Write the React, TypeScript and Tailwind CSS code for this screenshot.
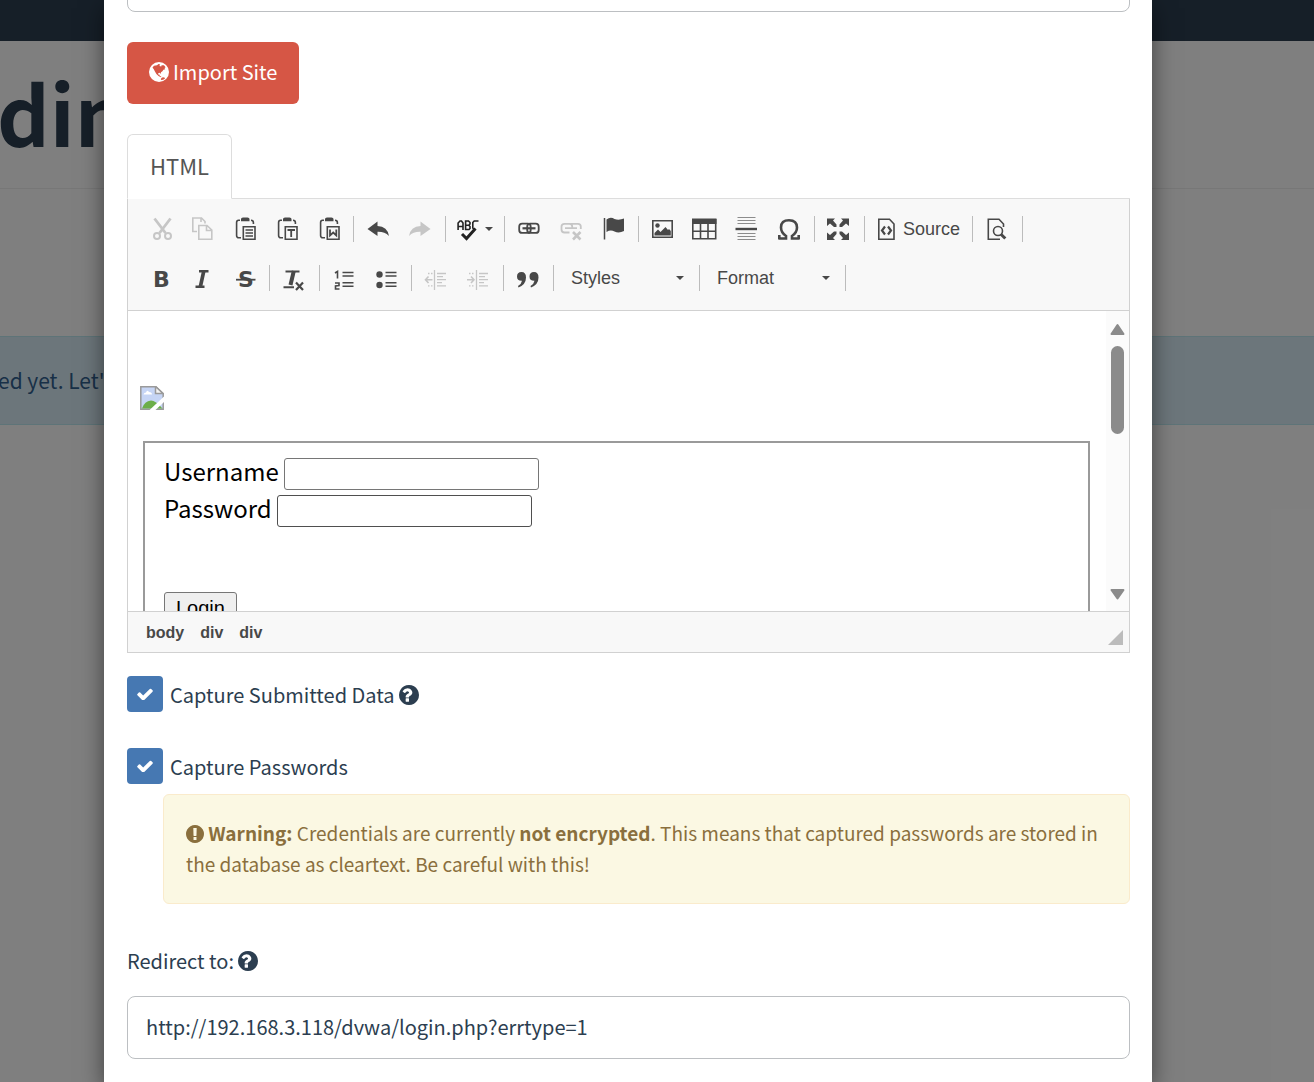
import React from 'react';

type IconProps = { children: React.ReactNode; muted?: boolean };

const Icon = ({ children, muted }: IconProps) => (
  <svg
    viewBox="0 0 24 24"
    width={24}
    height={24}
    fill="none"
    stroke="currentColor"
    strokeWidth={1.6}
    className={muted ? 'shrink-0 overflow-visible text-[#c6c6c6]' : 'shrink-0 overflow-visible text-[#484848]'}
    aria-hidden="true"
  >
    {children}
  </svg>
);

const ToolButton = ({ label, muted, children }: IconProps & { label: string }) => (
  <button type="button" title={label} aria-label={label} disabled={muted} className="flex h-12 w-[42px] items-center justify-center">
    <Icon muted={muted}>{children}</Icon>
  </button>
);

const Separator = () => <span className="ml-[3px] mr-1 h-[26px] w-px bg-[#bcbcbc]" />;

const Clipboard = ({ children }: { children?: React.ReactNode }) => (
  <>
    <path d="M7 3.200H5.500Q3.600 3.200 3.600 5.500V18.500Q3.600 20.800 6 20.800H8M18 3.200Q20.400 3.200 20.400 5.500V7" />
    <path d="M8 4.300V2Q8 .5 10 .5H14.500Q16.500 .5 16.500 2V4.300Z" fill="currentColor" stroke="none" />
    <path d="M10.300 9.800H22V22.200H10.300Z" />
    {children}
  </>
);

const QuestionCircle = () => (
  <svg viewBox="128 128 1536 1536" width={20} height={20} fill="currentColor" className="inline-block align-[-2px]" aria-hidden="true">
    <path d="M896 1376v-192q0-14-9-23t-23-9H672q-14 0-23 9t-9 23v192q0 14 9 23t23 9h192q14 0 23-9t9-23zm256-672q0-88-55.500-163T958 425t-170-41q-243 0-371 213-15 24 8 42l132 100q7 6 19 6 16 0 25-12 53-68 86-92 34-24 86-24 48 0 85.500 26t37.500 59q0 38-20 61t-68 45q-63 28-115.500 86.500T640 1020v36q0 14 9 23t23 9h192q14 0 23-9t9-23q0-19 21.500-49.500T972 957q32-18 49-28.500t46-35 44.500-48 28-60.500 12.500-81zm512 192q0 209-103 385.500T1281.500 1561 896 1664t-385.500-103T231 1281.500 128 896t103-385.500T510.500 231 896 128t385.500 103T1561 510.500 1664 896z" />
  </svg>
);

const ExclamationCircle = () => (
  <svg viewBox="128 128 1536 1536" width={18} height={18} fill="currentColor" className="inline-block align-[-2px]" aria-hidden="true">
    <path d="M896 128q209 0 385.500 103t279.500 279.500 103 385.500-103 385.500-279.500 279.500-385.500 103-385.500-103-279.500-279.500-103-385.500 103-385.500 279.500-279.500 385.500-103zm128 1247v-190q0-14-9-23.500t-22-9.500h-192q-13 0-23 10t-10 23v190q0 13 10 23t23 10h192q13 0 22-9.500t9-23.500zm-2-344l18-621q0-12-10-18-10-8-24-8h-220q-14 0-24 8-10 6-10 18l17 621q0 10 10 17.500t24 7.500h185q14 0 23.500-7.500t10.500-17.500z" />
  </svg>
);

const Globe = () => (
  <svg viewBox="0 0 20 20" width={20} height={20} aria-hidden="true">
    <circle cx="10" cy="10" r="10" fill="#fff" />
    <path
      d="M3.500 5.500 5 3.800 8 3.300 9.500 2 11.200 2.600 10.400 4 12.200 4.600 12.600 3.200 15 3.200 16.600 5.200 15.500 6 16.200 7.300 14.400 7.800 13.400 9.200 12 10.300 11.600 12 10.700 10.800 9.200 11.200 9.200 12.600 10.600 12.700 10.800 14 12.400 14.600 11.800 15.200 9.500 14 7.400 12 5.800 9.200 4.800 7.200Z"
      fill="#d65645"
    />
    <path d="M11.800 18 12.300 16 14 15.300 15.800 15.800 16 16.400 14.200 17.800Z" fill="#d65645" />
  </svg>
);

const Caret = () => (
  <svg viewBox="0 0 8 4" width={8} height={4} fill="#484848" aria-hidden="true">
    <path d="M0 0H8L4 4Z" />
  </svg>
);

const ToolSelect = ({ label }: { label: string }) => (
  <div className="relative flex items-center">
    <select aria-label={label} className="h-9 w-[138px] appearance-none bg-transparent pl-[13px] text-lg leading-6 text-[#484848] outline-none">
      <option>{label}</option>
    </select>
    <span className="pointer-events-none absolute right-3">
      <Caret />
    </span>
  </div>
);

const CheckOption = ({ id, children }: { id: string; children: React.ReactNode }) => (
  <div className="flex h-9 items-center gap-[7px]">
    <span className="relative flex size-9 shrink-0 items-center justify-center">
      <input id={id} type="checkbox" defaultChecked className="absolute inset-0 size-9 appearance-none rounded bg-[#4678b2]" />
      <svg viewBox="121 270 1550 1188" width={16} height={12} fill="#fff" className="pointer-events-none relative" aria-hidden="true">
        <path d="M1671 566q0 40-28 68l-724 724-136 136q-28 28-68 28t-68-28l-136-136-362-362q-28-28-28-68t28-68l136-136q28-28 68-28t68 28l294 295 656-657q28-28 68-28t68 28l136 136q28 28 28 68z" />
      </svg>
    </span>
    <label htmlFor={id} className="pt-[2px]">{children}</label>
  </div>
);

const FirstToolRow = () => (
  <div className="flex h-12 items-center">
    <ToolButton label="Cut" muted>
      <path d="M5.500 1.500 16.500 16M21.500 1.500 10.500 16" strokeWidth={2.800} />
      <circle cx="8" cy="19" r="3" strokeWidth={2} />
      <circle cx="19" cy="19" r="3" strokeWidth={2} />
    </ToolButton>
    <ToolButton label="Copy" muted>
      <path d="M6 14.500H1.800V1H10.500L14 4.500V6.500M10 1V5" />
      <path d="M7.800 8.500H16L20.800 13V22.200H7.800ZM15.500 8.500V13.500H20.500" />
    </ToolButton>
    <ToolButton label="Paste">
      <Clipboard>
        <path d="M12.500 13H20M12.500 16H20M12.500 19H20" />
      </Clipboard>
    </ToolButton>
    <ToolButton label="Paste as plain text">
      <Clipboard>
        <path d="M12.500 13H20M16.200 13V20" strokeWidth={1.800} />
      </Clipboard>
    </ToolButton>
    <ToolButton label="Paste from Word">
      <Clipboard>
        <path d="M13 12.500V18.500L16.200 15.500 19.300 18.500V12.500" strokeWidth={1.800} />
      </Clipboard>
    </ToolButton>
    <Separator />
    <ToolButton label="Undo">
      <path d="M.5 12 10.500 4.500V9Q20.500 9.500 22 19Q17.500 14.500 10.500 14.800V19Z" fill="currentColor" stroke="none" />
    </ToolButton>
    <ToolButton label="Redo" muted>
      <path d="M21.500 12 11.500 4.500V9Q1.500 9.500 0 19Q4.500 14.500 11.500 14.800V19Z" fill="currentColor" stroke="none" />
    </ToolButton>
    <Separator />
    <button type="button" title="Spell check" aria-label="Spell check" className="flex h-12 w-[51px] items-center gap-1 pl-[7px]">
      <Icon>
        <path d="M1.100 13V6L3 4H4.500L6 6V13M1 9.500H6M8.600 12.500V4H11.500L13 5.500V7L11.800 8.200 13 9.500V11.500L12 12.500ZM8.600 8.200H11.800M21.500 4H17.200L15.800 5.500V11L17 12.500" stroke="#222" />
        <path d="M5 17 9.500 21.500 18.500 11.500" stroke="#222" strokeWidth={3} />
      </Icon>
      <Caret />
    </button>
    <Separator />
    <ToolButton label="Link">
      <rect x="1.200" y="6.700" width="11.500" height="9.200" rx="3" strokeWidth={1.800} />
      <rect x="9.200" y="6.700" width="11.500" height="9.200" rx="3" strokeWidth={1.800} />
      <path d="M4.500 11.300H17.500" strokeWidth={2.200} />
    </ToolButton>
    <ToolButton label="Unlink" muted>
      <path d="M9.500 15.500H4.500Q1.500 15.500 1.500 12.500V9.500Q1.500 6.800 4.500 6.800H9.500Q12.200 6.800 12.200 9.500V12M10.500 6.800H18Q20.800 6.800 20.800 9.500V12M5 11.200H17" strokeWidth={1.800} />
      <path d="M13 15 20.500 22.500M20.500 15 13 22.500" strokeWidth={2.600} />
    </ToolButton>
    <ToolButton label="Anchor">
      <path d="M2.500 1V22.500" strokeWidth={1.500} />
      <path d="M4.500 2.500Q8.500-.5 12.500 2Q17 3.500 22 1.500V14Q17 16.500 12.500 14.500Q8.500 12.500 4.500 15Z" fill="currentColor" stroke="none" />
    </ToolButton>
    <Separator />
    <ToolButton label="Image">
      <path d="M.8 3.800H20.200V20.200H.8Z" />
      <circle cx="5.500" cy="8.500" r="2.200" fill="currentColor" stroke="none" />
      <path d="M2.500 18.500V16L6 12.500 8.500 15 13.500 10 16 13 17 12 18.800 14V18.500Z" fill="currentColor" stroke="none" />
    </ToolButton>
    <ToolButton label="Table">
      <path d="M-1.200 2V21.700H21.700V2M-1 14.300H22M6.500 6V21M14 6V21" />
      <path d="M-2 1.500H22.500V7H-2Z" fill="currentColor" stroke="none" />
    </ToolButton>
    <ToolButton label="Horizontal line">
      <path d="M1.500 .5H19.500M1.500 3.500H19.500M1.500 6.500H19.500M1.500 16.500H19.500M1.500 19.500H19.500M1.500 22.500H19.500" stroke="#8c8c8c" strokeWidth={1.200} />
      <path d="M-.5 12H21" strokeWidth={2.400} />
    </ToolButton>
    <ToolButton label="Special character">
      <path d="M1 21.500H8V19Q3 15.500 3 10.500Q3 3.200 11 3.200T19 10.500Q19 15.500 14 19V21.500H21M1.300 22.500V18M20.700 22.500V18" strokeWidth={2.600} />
    </ToolButton>
    <Separator />
    <ToolButton label="Maximize">
      <g fill="currentColor" stroke="none">
        <path d="M-1 1.500H7L5 3.500 8.500 7.500V10H6L2 6.500-1 9Z" />
        <path d="M21 1.500H13L15 3.500 11.500 7.500V10H14L18 6.500 21 9Z" />
        <path d="M-1 23H7L5 21 8.500 17V14.500H6L2 18-1 15.500Z" />
        <path d="M21 23H13L15 21 11.500 17V14.500H14L18 18 21 15.500Z" />
      </g>
    </ToolButton>
    <Separator />
    <button type="button" className="flex h-12 items-center gap-px px-[9px] text-lg text-[#484848]">
      <Icon>
        <path d="M.8 2.300H11.500L16 7V22.200H.8Z" />
        <path d="M7 9.500 4 13.500 7 17.500M10 9.500 13 13.500 10 17.500" strokeWidth={2.200} />
      </Icon>
      Source
    </button>
    <Separator />
    <ToolButton label="Preview">
      <path d="M14 22.200H2.300V2.300H13L17.500 7V10" />
      <circle cx="12" cy="14" r="4.500" />
      <path d="M15 17.200 19.300 21.500" strokeWidth={3} />
    </ToolButton>
    <Separator />
  </div>
);

const SecondToolRow = () => (
  <div className="flex h-12 items-center">
    <ToolButton label="Bold">
      <text x="4" y="21" fill="currentColor" stroke="none" className="font-['DejaVu_Sans'] text-[22px] font-bold">B</text>
    </ToolButton>
    <ToolButton label="Italic">
      <path d="M8 5.300H17.500M4.500 20.700H13.500" strokeWidth={2.400} />
      <path d="M12.800 5 9.300 21" strokeWidth={3.600} />
    </ToolButton>
    <ToolButton label="Strikethrough">
      <text x="5" y="21" fill="currentColor" stroke="none" className="font-['DejaVu_Sans'] text-[22px] font-bold">S</text>
      <path d="M3 13.700H22.500" strokeWidth={1.800} />
    </ToolButton>
    <Separator />
    <ToolButton label="Remove format">
      <path d="M2.500 5.500H16.500M.5 21.300H11" strokeWidth={2} />
      <path d="M10.800 5 7.500 19" strokeWidth={4} />
      <path d="M13 16.500 20 24M20 16.500 13 24" strokeWidth={2.200} />
    </ToolButton>
    <Separator />
    <ToolButton label="Numbered list">
      <path d="M2 7 4.500 5.500V12.500M2 17H6V19.500L2.500 20V23H6.500" />
      <path d="M9.500 6.500H20.500M9.500 10H20.500M9.500 16.700H20.500M9.500 20.200H20.500" />
    </ToolButton>
    <ToolButton label="Bulleted list">
      <circle cx="4.500" cy="8.500" r="3.200" fill="currentColor" stroke="none" />
      <circle cx="4.500" cy="19" r="3.200" fill="currentColor" stroke="none" />
      <path d="M10.500 6.500H21.500M10.500 10H21.500M10.500 16.700H21.500M10.500 20.200H21.500" />
    </ToolButton>
    <Separator />
    <ToolButton label="Decrease indent" muted>
      <path d="M9.500 4V24M12 7.500H21M12 10.700H18M12 13.700H21M12 16.700H17M12 19.900H21" strokeWidth={1.300} />
      <path d="M3 7.500H8M3 19.900H8" strokeDasharray="1.500 1.500" strokeWidth={1.300} />
      <path d="M0 13.700H7.500M3.500 10.500 .5 13.700 3.500 17" />
    </ToolButton>
    <ToolButton label="Increase indent" muted>
      <path d="M9.500 4V24M12 7.500H21M12 10.700H18M12 13.700H21M12 16.700H17M12 19.900H21" strokeWidth={1.300} />
      <path d="M2 7.500H8M2 19.900H8" strokeDasharray="1.500 1.500" strokeWidth={1.300} />
      <path d="M0 13.700H7.500M4 10.500 7 13.700 4 17" />
    </ToolButton>
    <Separator />
    <ToolButton label="Block quote">
      <g fill="currentColor" stroke="none">
        <path d="M4.500 6Q9 6 9 11.500Q9 18.500 1.500 21.500L1 20Q4.500 18 5 14.800Q0 15 0 10.500Q0 6 4.500 6Z" />
        <path d="M17 6Q21.500 6 21.500 11.500Q21.500 18.500 14 21.500L13.500 20Q17 18 17.500 14.800Q12.500 15 12.500 10.500Q12.500 6 17 6Z" />
      </g>
    </ToolButton>
    <Separator />
    <ToolSelect label="Styles" />
    <Separator />
    <ToolSelect label="Format" />
    <Separator />
  </div>
);

const BrokenImage = () => (
  <svg viewBox="0 0 24 24" width={24} height={24} className="block" role="img" aria-label="Missing image">
    <path d="M.8 .8H16L23.200 7.500V23.200H.8Z" fill="#c6d5f5" stroke="#9a9a9a" strokeWidth={1.500} />
    <path d="M3.500 8.500Q4 6.500 6 6.500Q7 3.500 9 6Q12 6 12 8.500Z" fill="#fff" />
    <path d="M2 22.500Q4.500 15 11 14.500Q15.500 14.500 22.500 22.500Z" fill="#6cae4a" />
    <path d="M15.500 1V7.500H23L16 1Z" fill="#f4f4f4" stroke="#9a9a9a" strokeWidth={1.500} />
    <path d="M9 24.500 24.500 10V15.500L15 24.500Z" fill="#fff" />
  </svg>
);

const EditorContent = () => (
  <div className="flex h-[300px] overflow-hidden bg-white">
    <div className="min-w-0 flex-1 pl-3 pr-4 pt-[75px] font-['Noto_Sans_CJK_SC',sans-serif] text-2xl text-black">
      <BrokenImage />
      <fieldset className="ml-[3px] mt-[31px] h-[260px] border-2 border-[#9a9a9a] px-[19px] pt-3">
        <div className="flex h-[37px] items-center gap-[5px]">
          <label htmlFor="username" className="pb-[6px] leading-8">Username</label>
          <input id="username" type="text" className="h-8 w-[255px] rounded-[3px] border border-[#767676] px-1" />
        </div>
        <div className="flex h-[37px] items-center gap-[5px]">
          <label htmlFor="password" className="pb-[6px] leading-8">Password</label>
          <input id="password" type="password" className="h-8 w-[255px] rounded-[3px] border border-[#4f4f4f] px-1" />
        </div>
        <button type="button" className="mt-[63px] h-[31px] rounded-[3px] border border-[#767676] bg-[#efefef] px-[11px] font-['Liberation_Sans',sans-serif] text-xl leading-7">
          Login
        </button>
      </fieldset>
    </div>
    <div className="flex w-[23px] flex-col items-center justify-between bg-[#fbfbfb] py-[11px]">
      <div className="flex flex-col items-center gap-[10px]">
        <svg viewBox="0 0 15 14" width={15} height={14} fill="#8b8b8b" stroke="#8b8b8b" strokeWidth={2} strokeLinejoin="round" aria-hidden="true">
          <path d="M7.500 3 13.500 12H1.500Z" />
        </svg>
        <span className="h-[88px] w-[13px] rounded-full bg-[#8b8b8b]" />
      </div>
      <svg viewBox="0 0 15 12" width={15} height={12} fill="#8b8b8b" stroke="#8b8b8b" strokeWidth={2} strokeLinejoin="round" aria-hidden="true">
        <path d="M7.500 10.500 13.500 2H1.500Z" />
      </svg>
    </div>
  </div>
);

const HtmlEditor = () => (
  <div className="border border-t-0 border-[#d1d1d1] font-['Liberation_Sans',sans-serif]">
    <div className="space-y-px border-b border-[#d1d1d1] bg-[#f8f8f8] pb-2 pl-3 pt-[6px]">
      <FirstToolRow />
      <SecondToolRow />
    </div>
    <EditorContent />
    <div className="flex h-[41px] items-center justify-between border-t border-[#d1d1d1] bg-[#f8f8f8] pl-[18px] pr-[6px]">
      <div className="flex gap-4 pt-px text-base font-bold leading-5 text-[#484848]">
        <a href="#body">body</a>
        <a href="#div">div</a>
        <a href="#div">div</a>
      </div>
      <svg viewBox="0 0 15 15" width={15} height={15} fill="#bcbcbc" className="mt-[10px]" aria-hidden="true">
        <path d="M15 0V15H0Z" />
      </svg>
    </div>
  </div>
);

const App: React.FC = () => {
  return (
    <div className="relative h-screen overflow-hidden bg-white font-['Noto_Sans_CJK_SC',sans-serif] text-xl text-[#2c3e50]">
      {/* Page behind the modal */}
      <div className="h-[41px] bg-[#2c3e50]" />
      <h1 className="h-[148px] border-b border-[#eeeeee] pt-[11px] -indent-[3px] text-[82px] font-bold leading-[120px]">din</h1>
      <div className="mt-[147px] flex h-[89px] items-center border-y border-[#bce8f1] bg-[#d9edf7] -indent-[2px] text-[21px] text-[#31608f]">ed yet. Let'</div>
      <div className="absolute inset-0 bg-black/50" />

      {/* Modal */}
      <div className="absolute inset-y-0 left-[104px] right-[162px] bg-white shadow-[0_8px_22px_rgba(0,0,0,0.5)]">
        <form className="h-full overflow-hidden pl-[23px] pr-[22px]">
          <input aria-label="Name" type="text" className="-mt-[51px] block h-[63px] w-full rounded-lg border border-[#bcbfc2] px-[18px]" />

          <button type="button" className="mt-[30px] flex h-[62px] items-center gap-1 rounded-md bg-[#d65645] px-[22px] pb-[2px] text-white">
            <Globe />
            Import Site
          </button>

          <div className="mt-[30px] flex border-b border-[#dddddd]">
            <a href="#html" className="-mb-px flex h-[65px] items-center rounded-t-md border border-b-white border-[#dddddd] bg-white px-[22px] pb-[2px] text-[22px] text-[#555555]">
              HTML
            </a>
          </div>
          <HtmlEditor />

          <div className="mt-[23px] space-y-9">
            <CheckOption id="capture-data">
              Capture Submitted Data <QuestionCircle />
            </CheckOption>
            <CheckOption id="capture-passwords">Capture Passwords</CheckOption>
          </div>

          <div className="ml-9 mt-[10px] rounded-md border border-[#faebcc] bg-[#fbf8e3] px-[22px] pb-6 pt-[22px] text-[19px] leading-[31px] text-[#8a6f3d]">
            <ExclamationCircle /> <b>Warning:</b> Credentials are currently <b>not encrypted</b>. This means that captured passwords are stored in the
            database as cleartext. Be careful with this!
          </div>

          <label htmlFor="redirect" className="mt-[41px] block leading-8">
            Redirect to: <QuestionCircle />
          </label>
          <input
            id="redirect"
            type="text"
            defaultValue="http://192.168.3.118/dvwa/login.php?errtype=1"
            className="mt-[19px] block h-[63px] w-full rounded-lg border border-[#bcbfc2] px-[18px] pb-[2px] outline-none"
          />
        </form>
      </div>
    </div>
  );
};

export default App;
